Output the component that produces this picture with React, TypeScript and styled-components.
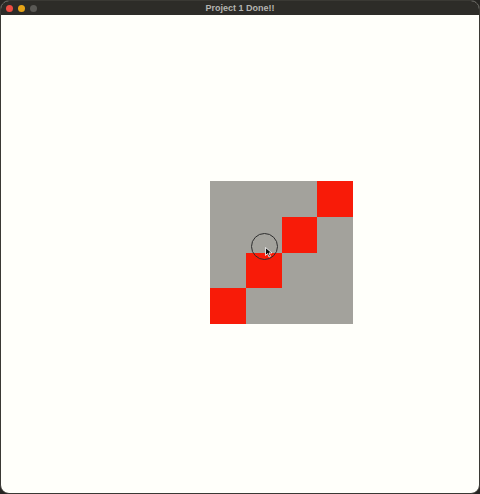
import React from "react";
import styled, { createGlobalStyle } from "styled-components";

const Global = createGlobalStyle`
  html, body { margin: 0; padding: 0; background: #262522; }
  body { font-family: "Liberation Sans", Arial, sans-serif; }
`;

const Window = styled.div`
  width: 480px;
  height: 494px;
  display: flex;
  flex-direction: column;
  background: #fffffa;
  border-radius: 9px;
  overflow: hidden;
  box-sizing: border-box;
  border: 1px solid #3a3934;
`;

const TitleBar = styled.div`
  height: 14px;
  flex: none;
  background: #2d2c28;
  display: flex;
  align-items: center;
  position: relative;
  padding-left: 5px;
  gap: 5px;
`;

const Light = styled.span<{ $c: string }>`
  width: 7px;
  height: 7px;
  border-radius: 50%;
  background: ${(p) => p.$c};
`;

const Title = styled.div`
  position: absolute;
  left: 0;
  right: 0;
  top: 0;
  height: 14px;
  line-height: 14px;
  text-align: center;
  font-size: 9px;
  font-weight: bold;
  color: #b4b4b0;
  pointer-events: none;
`;

const Content = styled.div`
  flex: 1;
  position: relative;
  padding: 166px 0 0 209px;
`;

const Board = styled.div`
  width: 143px;
  height: 143px;
  display: grid;
  grid-template-columns: repeat(4, 1fr);
  grid-template-rows: repeat(4, 1fr);
`;

const Cell = styled.div<{ $on: boolean }>`
  background: ${(p) => (p.$on ? "#f81b08" : "#a3a29c")};
`;

const Cursor = styled.div`
  position: absolute;
  left: 250px;
  top: 218px;
  width: 27px;
  height: 27px;
  box-sizing: border-box;
  border: 1.5px solid #2e2e2e;
  border-radius: 50%;
`;

const Arrow = styled.svg`
  position: absolute;
  left: 264px;
  top: 232px;
`;

export default function App() {
  const cells = [];
  for (let r = 0; r < 4; r++) {
    for (let c = 0; c < 4; c++) {
      cells.push(<Cell key={`${r}-${c}`} $on={r + c === 3} />);
    }
  }
  return (
    <>
      <Global />
      <Window>
        <TitleBar>
          <Light $c="#ee4d43" />
          <Light $c="#e6a417" />
          <Light $c="#5a5955" />
          <Title>Project 1 Done!!</Title>
        </TitleBar>
        <Content>
          <Board>{cells}</Board>
          <Cursor />
          <Arrow width="8" height="11" viewBox="0 0 8 11">
            <path d="M0.5 0.5 L0.5 8.5 L2.5 6.5 L4 10 L5.5 9.3 L4 6 L7 6 Z" fill="#111" stroke="#fff" strokeWidth="0.8" />
          </Arrow>
        </Content>
      </Window>
    </>
  );
}
